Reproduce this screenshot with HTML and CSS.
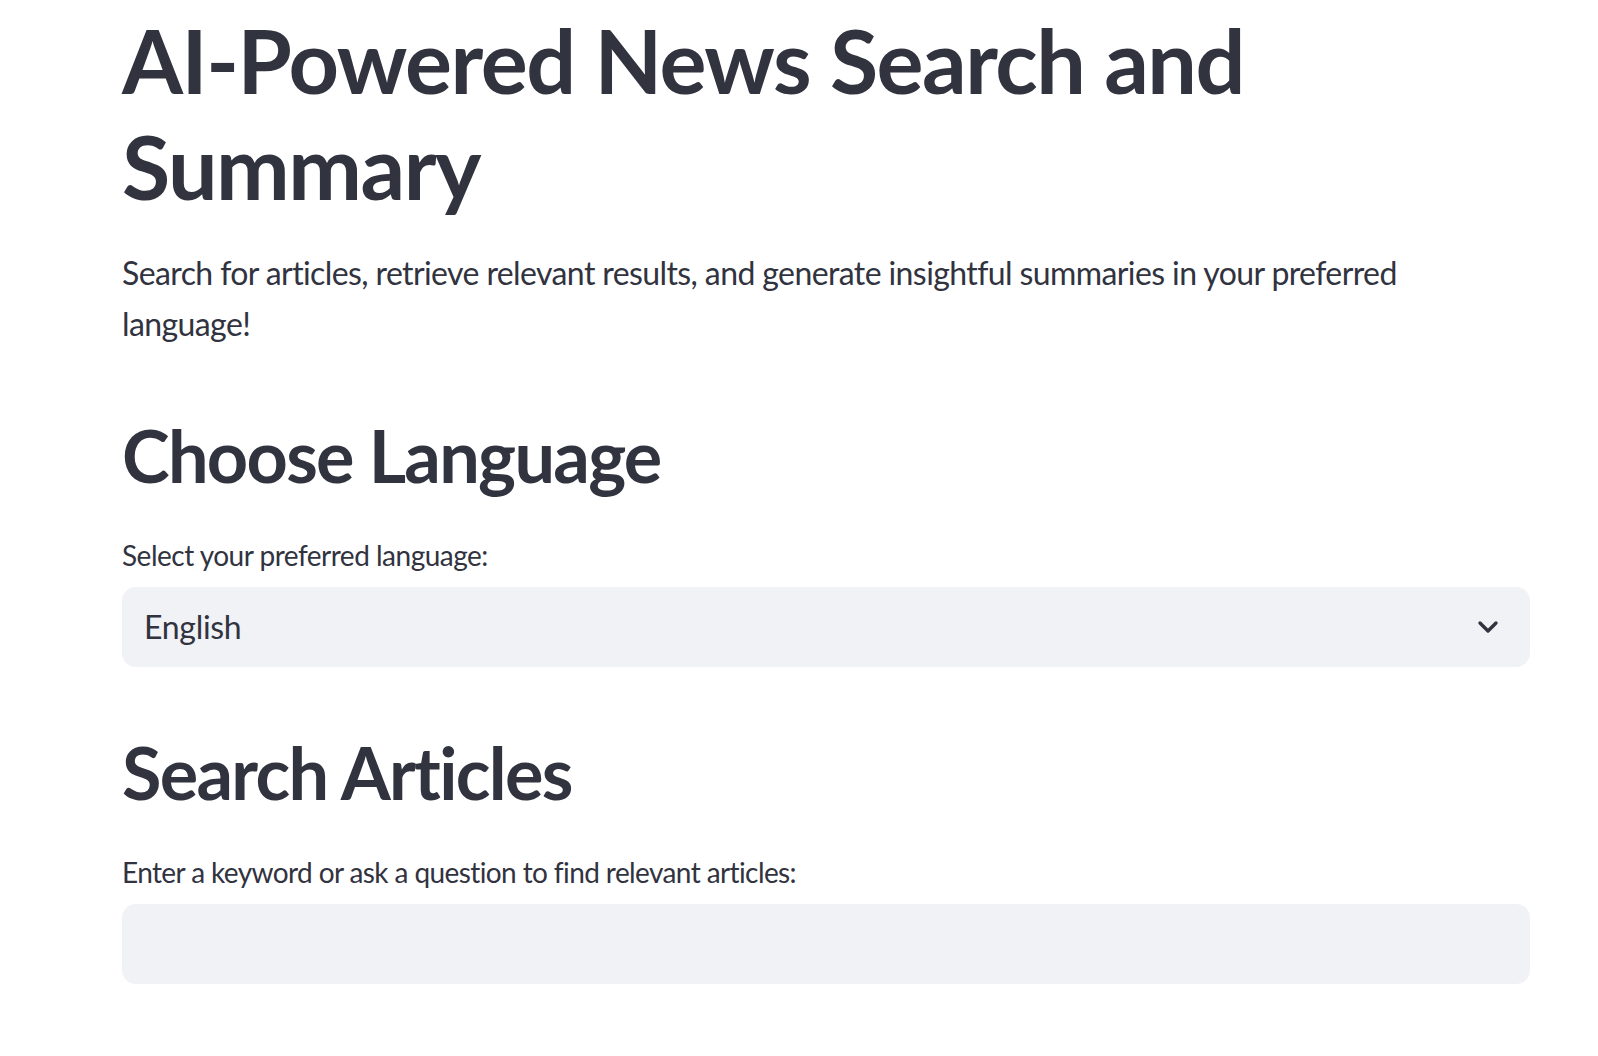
FILE: index.html
```html
<!DOCTYPE html>
<html lang="en">
<head>
<meta charset="utf-8">
<title>AI-Powered News Search and Summary</title>
<link rel="stylesheet" href="styles.css">
</head>
<body>
<main class="main">
  <h1 class="title">AI-Powered News Search and Summary</h1>
  <p class="intro">Search for articles, retrieve relevant results, and generate insightful summaries in your preferred language!</p>

  <h2 class="section">Choose Language</h2>
  <div class="field">
    <label class="label">Select your preferred language:</label>
    <div class="select">
      <span class="select-value">English</span>
      <svg class="chevron" width="22" height="14" viewBox="0 0 22 14" aria-hidden="true"><path d="M3 3 L11 11 L19 3" fill="none" stroke="#31333f" stroke-width="3.4" stroke-linecap="round" stroke-linejoin="round"/></svg>
    </div>
  </div>

  <h2 class="section section-2">Search Articles</h2>
  <div class="field">
    <label class="label label-long">Enter a keyword or ask a question to find relevant articles:</label>
    <div class="input"></div>
  </div>
</main>
</body>
</html>
```

FILE: styles.css
```css
html, body {
  margin: 0;
  padding: 0;
  background: #ffffff;
}
body {
  font-family: "Source Sans Pro", "Lato", "Noto Sans", sans-serif;
  color: #31333f;
}
.main {
  padding: 8px 68px 40px 122px;
}
.title {
  margin: 0;
  font-size: 88px;
  font-weight: 700;
  line-height: 1.2;
  letter-spacing: -1.5px;
}
.intro {
  margin: 28px 0 0;
  font-size: 32px;
  line-height: 1.6;
  letter-spacing: -0.6px;
}
.section {
  margin: 62px 0 0;
  font-size: 72px;
  font-weight: 700;
  line-height: 1.2;
  letter-spacing: -1.7px;
}
.field {
  margin-top: 35px;
  display: flex;
  flex-direction: column;
  gap: 9px;
}
.label {
  font-size: 28px;
  line-height: 1.6;
  letter-spacing: -0.5px;
}
.label-long {
  letter-spacing: -0.6px;
}
.select {
  height: 80px;
  border-radius: 14px;
  background: #f0f2f6;
  display: flex;
  align-items: center;
  justify-content: space-between;
  padding: 0 31px 0 22px;
}
.select-value {
  font-size: 32px;
  letter-spacing: -0.3px;
}
.chevron {
  display: block;
}
.input {
  height: 80px;
  border-radius: 14px;
  background: #f0f2f6;
}
```
